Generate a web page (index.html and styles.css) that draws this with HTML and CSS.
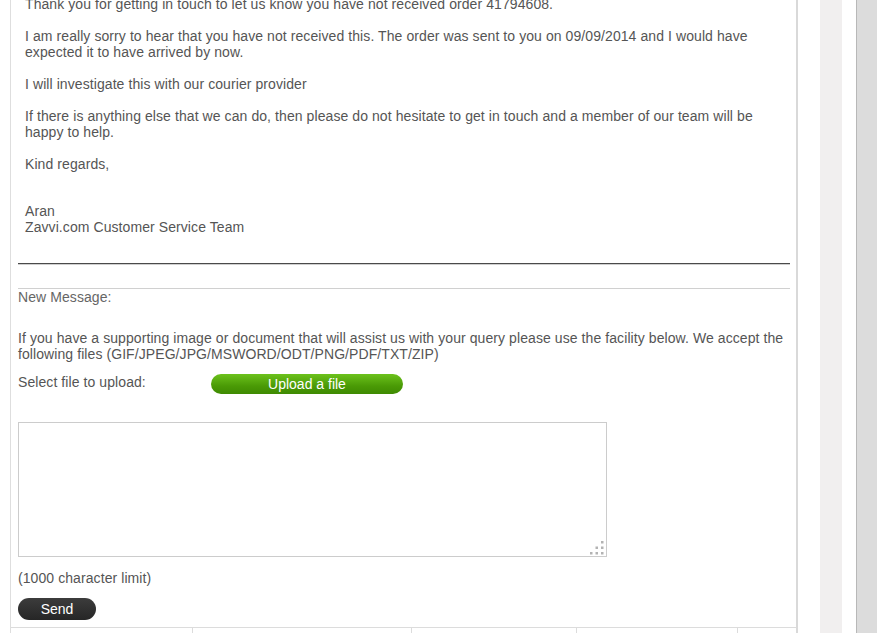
FILE: index.html
```html
<!DOCTYPE html>
<html>
<head>
<meta charset="utf-8">
<link rel="stylesheet" href="styles.css">
</head>
<body>
<div class="page">
  <div class="main">
    <div class="message">
      <p>Thank you for getting in touch to let us know you have not received order 41794608.</p>
      <p>I am really sorry to hear that you have not received this. The order was sent to you on 09/09/2014 and I would have expected it to have arrived by now.</p>
      <p>I will investigate this with our courier provider</p>
      <p>If there is anything else that we can do, then please do not hesitate to get in touch and a member of our team will be happy to help.</p>
      <p class="regards">Kind regards,<br><br></p>
      <p class="sig">Aran<br>Zavvi.com Customer Service Team</p>
    </div>
    <div class="reply">
      <div class="rule-dark"></div>
      <div class="rule-light"></div>
      <div class="label">New Message:</div>
      <p class="info">If you have a supporting image or document that will assist us with your query please use the facility below. We accept the following files (GIF/JPEG/JPG/MSWORD/ODT/PNG/PDF/TXT/ZIP)</p>
      <div class="upload-row">
        <span class="upload-label">Select file to upload:</span>
        <button class="btn-upload" type="button">Upload a file</button>
      </div>
      <div class="ta-wrap">
        <textarea class="ta"></textarea>
        <svg class="grip" width="14" height="14" viewBox="0 0 14 14">
          <g fill="#b3b3b3">
            <rect x="11" y="0" width="2.5" height="2.5"/>
            <rect x="5.5" y="5.5" width="2.5" height="2.5"/>
            <rect x="11" y="5.5" width="2.5" height="2.5"/>
            <rect x="0" y="11" width="2.5" height="2.5"/>
            <rect x="5.5" y="11" width="2.5" height="2.5"/>
            <rect x="11" y="11" width="2.5" height="2.5"/>
          </g>
        </svg>
      </div>
      <div class="limit">(1000 character limit)</div>
      <button class="btn-send" type="button">Send</button>
    </div>
    <div class="table-row">
      <div class="cell c1"></div>
      <div class="cell c2"></div>
      <div class="cell c3"></div>
      <div class="cell c4"></div>
      <div class="cell c5"></div>
    </div>
  </div>
  <div class="gutter"></div>
  <div class="strip"></div>
  <div class="gutter2"></div>
  <div class="scroll"></div>
</div>
</body>
</html>
```

FILE: styles.css
```css
html, body {
  margin: 0;
  padding: 0;
  background: #fff;
  overflow: hidden;
}
body {
  font-family: "Liberation Sans", Arial, sans-serif;
  font-size: 14px;
  line-height: 16px;
  letter-spacing: 0.08px;
  color: #555;
}
.page {
  display: flex;
  height: 637px;
  margin-top: -4px;
  padding-left: 10px;
}
.main {
  width: 785px;
  border-left: 1px solid #dedede;
  border-right: 2px solid #d9d9d9;
  display: flex;
  flex-direction: column;
}
.message {
  padding: 0 14px;
}
.message p {
  margin: 0 0 16px;
}
.message p.regards {
  margin-bottom: 15px;
}
.message p.sig {
  margin: 0;
}
.reply {
  padding: 28px 6px 0 7px;
}
.rule-dark {
  height: 0;
  border-top: 1px solid #4a4a4a;
  border-bottom: 1px solid #cfcfcf;
}
.rule-light {
  height: 0;
  border-top: 1px solid #d0d0d0;
  margin-top: 23px;
}
.label {
  margin-top: 0;
  color: #666;
}
.info {
  margin: 25px 0 0;
  color: #555;
}
.upload-row {
  display: flex;
  align-items: flex-start;
  margin-top: 12px;
}
.upload-label {
  width: 193px;
  color: #555;
}
.btn-upload {
  width: 192px;
  height: 20px;
  margin-top: 0;
  border: none;
  border-radius: 10px;
  background: linear-gradient(#6cc21c, #4a9a06 60%, #3e8a02);
  color: #fff;
  font-family: "Liberation Sans", Arial, sans-serif;
  font-size: 14px;
  line-height: 20px;
  padding: 0;
}
.ta-wrap {
  position: relative;
  width: 589px;
  height: 135px;
  margin-top: 28px;
}
.ta {
  display: block;
  box-sizing: border-box;
  width: 589px;
  height: 135px;
  border: 1px solid #cccccc;
  resize: none;
  margin: 0;
  padding: 2px;
  font-family: "Liberation Sans", Arial, sans-serif;
  font-size: 14px;
}
.grip {
  position: absolute;
  right: 3px;
  bottom: 2px;
}
.limit {
  margin-top: 13px;
  color: #555;
}
.btn-send {
  display: block;
  width: 78px;
  height: 22px;
  margin-top: 12px;
  border: none;
  border-radius: 11px;
  background: linear-gradient(#3c3c3c, #262626);
  color: #fff;
  font-family: "Liberation Sans", Arial, sans-serif;
  font-size: 14px;
  line-height: 22px;
  padding: 0;
}
.table-row {
  display: flex;
  margin-top: 7px;
  border-top: 1px solid #dcdcdc;
  flex: 1;
}
.cell {
  border-right: 1px solid #dcdcdc;
}
.c1 { width: 181px; }
.c2 { width: 218px; }
.c3 { width: 164px; }
.c4 { width: 160px; }
.c5 { flex: 1; border-right: none; }
.gutter {
  width: 22px;
}
.strip {
  width: 22px;
  background: #f1efef;
}
.gutter2 {
  width: 14px;
}
.scroll {
  flex: 1;
  border-left: 1px solid #b8b8b8;
  background: #dcdcdc;
}
```
